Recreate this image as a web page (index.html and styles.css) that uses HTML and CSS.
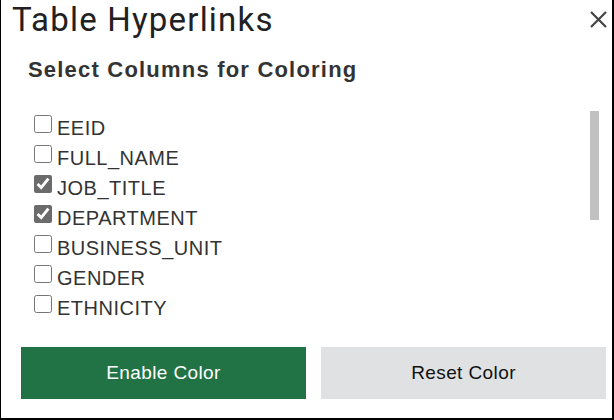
FILE: index.html
```html
<!DOCTYPE html>
<html lang="en">
<head>
<meta charset="utf-8">
<title>Table Hyperlinks</title>
<link rel="stylesheet" href="styles.css">
</head>
<body>
<div class="dialog">
  <div class="header">
    <h1 class="title">Table Hyperlinks</h1>
    <svg class="close" width="17" height="17" viewBox="0 0 17 17" aria-label="Close">
      <path d="M1 1 L16 16 M16 1 L1 16" stroke="#444" stroke-width="2.2" fill="none"/>
    </svg>
  </div>
  <h2 class="subtitle">Select Columns for Coloring</h2>
  <div class="list-wrap">
    <ul class="list">
      <li class="item"><input type="checkbox" class="cb"><span class="label">EEID</span></li>
      <li class="item"><input type="checkbox" class="cb"><span class="label">FULL_NAME</span></li>
      <li class="item"><input type="checkbox" class="cb" checked><span class="label">JOB_TITLE</span></li>
      <li class="item"><input type="checkbox" class="cb" checked><span class="label">DEPARTMENT</span></li>
      <li class="item"><input type="checkbox" class="cb"><span class="label">BUSINESS_UNIT</span></li>
      <li class="item"><input type="checkbox" class="cb"><span class="label">GENDER</span></li>
      <li class="item"><input type="checkbox" class="cb"><span class="label">ETHNICITY</span></li>
    </ul>
    <div class="thumb"></div>
  </div>
  <div class="actions">
    <button class="btn btn-primary">Enable Color</button>
    <button class="btn btn-secondary">Reset Color</button>
  </div>
</div>
</body>
</html>
```
FILE: styles.css
```css
html, body {
  margin: 0;
  padding: 0;
  background: #fff;
}

.dialog {
  width: 614px;
  height: 420px;
  box-sizing: border-box;
  border-left: 1px solid #000;
  border-right: 2px solid #000;
  border-bottom: 2px solid #000;
  display: flex;
  flex-direction: column;
  font-family: "Liberation Sans", Arial, sans-serif;
  color: #333;
}

.header {
  display: flex;
  justify-content: space-between;
  align-items: flex-start;
  padding: 1px 5px 0 11px;
}

.title {
  margin: 0;
  font-family: Roboto, "Liberation Sans", sans-serif;
  font-weight: 400;
  font-size: 33px;
  line-height: 38px;
  letter-spacing: 1.2px;
  color: #212121;
}

.close {
  margin-top: 10px;
  display: block;
}

.subtitle {
  margin: 18px 0 0 0;
  padding-left: 27px;
  font-size: 22px;
  line-height: 26px;
  font-weight: 700;
  letter-spacing: 1.2px;
  color: #333;
}

.list-wrap {
  position: relative;
  margin-top: 22px;
  height: 215px;
  overflow: hidden;
}

.list {
  list-style: none;
  margin: 0;
  padding: 8px 0 0 33px;
}

.item {
  display: flex;
  align-items: flex-start;
  height: 30px;
}

.cb {
  width: 18px;
  height: 18px;
  margin: 2px 5px 0 0;
  accent-color: #6b6b6b;
  flex: none;
}

.label {
  font-size: 20px;
  line-height: 30px;
  letter-spacing: 0.5px;
  color: #333;
}

.thumb {
  position: absolute;
  right: 13px;
  top: 6px;
  width: 9px;
  height: 109px;
  background: #c1c1c1;
}

.actions {
  display: flex;
  gap: 15px;
  margin-top: 27px;
  padding: 0 6px 0 20px;
}

.btn {
  flex: 1;
  height: 52px;
  border: none;
  border-radius: 0;
  font-family: "Liberation Sans", Arial, sans-serif;
  font-size: 19px;
  letter-spacing: 0.4px;
  cursor: pointer;
}

.btn-primary {
  background: #217346;
  color: #fff;
}

.btn-secondary {
  background: #dfe1e3;
  color: #111;
}
```
